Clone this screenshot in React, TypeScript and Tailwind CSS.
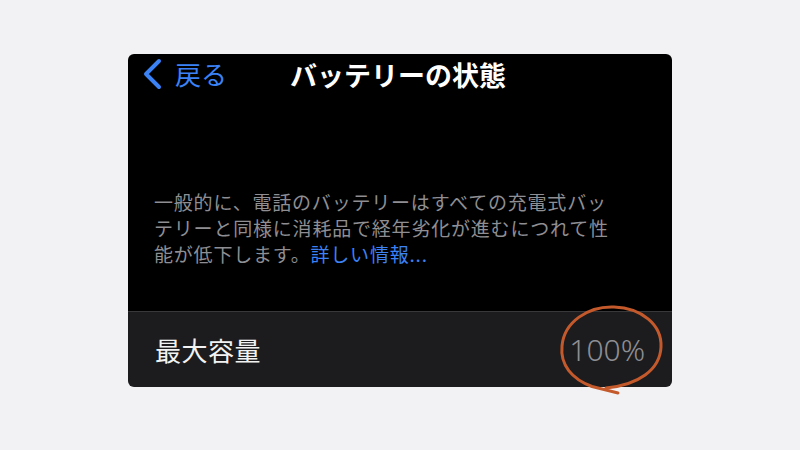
import React from 'react';

const jp = '"Noto Sans CJK JP", "Noto Sans", sans-serif';

function BackChevron() {
  return (
    <svg width="22" height="32" viewBox="0 0 22 32" fill="none">
      <path d="M18 3 L5 16 L18 29" stroke="#3a82f6" strokeWidth="4" strokeLinecap="round" strokeLinejoin="round" />
    </svg>
  );
}

// hand-drawn orange loop round the percentage
function Scribble() {
  return (
    <svg
      className="absolute left-[422px] top-[-12px] overflow-visible pointer-events-none"
      width="125"
      height="100"
      viewBox="0 0 125 100"
      fill="none"
    >
      <path
        d="M68 93 L42 86.5 C22 79 10 65 12 46 C14 22 38 6 64 7 C92 8 112 25 111 47 C110 70 88 85 56 88"
        stroke="#c45a2c"
        strokeWidth="3"
        strokeLinecap="round"
        strokeLinejoin="round"
      />
    </svg>
  );
}

export default function App() {
  return (
    <div className="w-[800px] h-[450px] bg-[#f2f2f4] pt-[54px]" style={{ fontFamily: jp }}>
      <div className="ml-[128px] w-[544px]">
        {/* 上部 */}
        <div className="bg-black rounded-t-[6px] h-[257px] flex flex-col">
          <div className="relative h-[40px] flex items-center justify-center">
            <div className="absolute left-[13px] top-[4px] flex items-center gap-[12px]">
              <BackChevron />
              <span className="text-[26px] leading-none text-[#3a82f6]">戻る</span>
            </div>
            <h1 className="ml-[-4px] text-[27px] font-bold leading-none text-white">バッテリーの状態</h1>
          </div>
          <p className="mt-[95px] px-[26px] text-[19px] leading-[26px] text-[#8e8e93] tracking-[0.8px]">
            一般的に、電話のバッテリーはすべての充電式バッ
            <br />
            テリーと同様に消耗品で経年劣化が進むにつれて性
            <br />
            能が低下します。<span className="text-[#3a82f6]">詳しい情報...</span>
          </p>
        </div>
        <div className="h-px bg-[#38383a]" />
        {/* 最大容量 */}
        <div className="relative h-[75px] bg-[#1c1c1e] rounded-b-[6px] flex items-center justify-between px-[27px]">
          <span className="text-[26px] leading-none text-[#f2f2f2] tracking-[0.5px]">最大容量</span>
          <span
            className="text-[30px] leading-none text-[#8e8e93]"
            style={{ fontFamily: '"Noto Sans", sans-serif', fontWeight: 300 }}
          >
            100%
          </span>
          <Scribble />
        </div>
      </div>
    </div>
  );
}
